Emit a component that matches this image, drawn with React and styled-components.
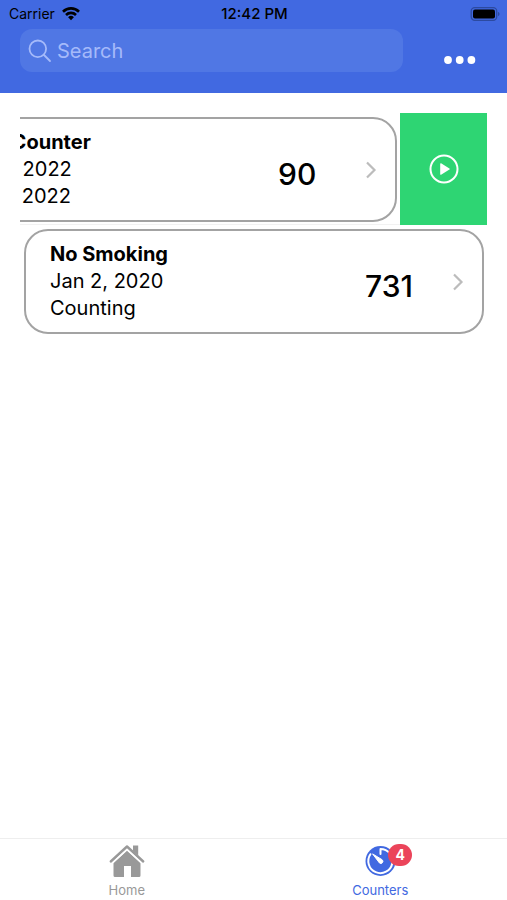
import React from "react";
import styled, { createGlobalStyle } from "styled-components";

const GlobalStyle = createGlobalStyle`
  *, *::before, *::after { box-sizing: border-box; }
  body { margin: 0; background: #fff; font-family: Inter, "Liberation Sans", sans-serif; color: #000; }
  button, input { font: inherit; }
`;

const Screen = styled.div`
  display: flex;
  flex-direction: column;
  min-height: 100vh;
`;

const Header = styled.header`
  background: #4169e1;
  padding-bottom: 21px;
`;

const StatusBar = styled.div`
  display: grid;
  grid-template-columns: 1fr auto 1fr;
  align-items: center;
  height: 29px;
  padding: 0 7px 2px 9px;
  font-size: 14px;
  line-height: 18px;
`;

const Carrier = styled.span`
  display: flex;
  align-items: center;
  gap: 7px;
`;

const Clock = styled.time`
  font-size: 15px;
  font-weight: 500;
`;

const Battery = styled.svg`
  justify-self: end;
`;

const Toolbar = styled.div`
  display: flex;
  align-items: center;
  padding: 0 20px;
`;

const SearchField = styled.label`
  display: flex;
  flex: 1;
  min-width: 0;
  align-items: center;
  gap: 5px;
  height: 43px;
  padding: 0 8px;
  border-radius: 12px;
  background: #5077e4;
  color: #a5bafa;
`;

const SearchInput = styled.input`
  flex: 1;
  min-width: 0;
  padding: 0;
  border: 0;
  outline: 0;
  background: transparent;
  color: #fff;
  font-size: 20px;
  line-height: 28px;
  &::placeholder { color: #a5bafa; opacity: 1; }
`;

const MoreButton = styled.button`
  display: flex;
  align-items: flex-end;
  justify-content: flex-end;
  width: 84px;
  height: 43px;
  padding: 0 11px 8px;
  border: 0;
  background: transparent;
  color: #fff;
`;

const List = styled.ul`
  flex: 1;
  margin: 0;
  padding: 20px 20px 0;
  list-style: none;
`;

const Row = styled.li`
  display: flex;
  justify-content: flex-end;
  height: 112px;
  overflow: hidden;
  box-shadow: ${({ $divided }) => ($divided ? "inset 0 -1px #f2f2f2" : "none")};
`;

const Card = styled.article`
  display: flex;
  flex: 0 0 calc(100% - 7px);
  align-items: center;
  margin: 4px 3px 3px 4px;
  padding: 0 18px 0 24px;
  border: 2px solid #a3a3a3;
  border-radius: 24px;
`;

const Details = styled.div`
  flex: 1;
  font-size: 20px;
  line-height: 27px;
  white-space: nowrap;
`;

const Title = styled.h2`
  margin: 0;
  font-size: 20px;
  font-weight: 700;
`;

const Line = styled.p`
  margin: 0;
`;

const Count = styled.output`
  width: 87px;
  padding-top: 8px;
  font-size: 30px;
  line-height: 36px;
  font-weight: 500;
`;

const ResumeButton = styled.button`
  display: flex;
  flex: 0 0 87px;
  align-items: center;
  justify-content: center;
  padding: 0;
  border: 0;
  background: #2ed573;
  color: #fff;
`;

const TabBar = styled.nav`
  display: flex;
  height: 62px;
  border-top: 1px solid #eee;
`;

const Tab = styled.a`
  display: flex;
  flex: 1;
  flex-direction: column;
  align-items: center;
  gap: 4px;
  padding-top: 5px;
  color: ${({ $active }) => ($active ? "#4169e1" : "#999")};
  font-size: 13px;
  line-height: 16px;
  font-weight: 400;
  text-decoration: none;
`;

const IconBox = styled.span`
  position: relative;
  display: flex;
  height: 34px;
`;

const Badge = styled.span`
  position: absolute;
  left: 24px;
  top: 0;
  width: 24px;
  height: 22px;
  border-radius: 11px;
  background: #eb445a;
  color: #fff;
  font-size: 14px;
  line-height: 22px;
  font-weight: 700;
  text-align: center;
`;

function WifiIcon() {
  return (
    <svg width="18" height="14" viewBox="0 0 18 14" fill="none" stroke="#000" strokeWidth="2.6" aria-hidden="true">
      <path d="M1 4.7C5.5.3 12.5.3 17 4.7M4 8C6.8 5.2 11.2 5.2 14 8" />
      <path d="M6.1 10.2a4.1 4.1 0 0 1 5.8 0L9 13.2z" fill="#000" stroke="none" />
    </svg>
  );
}

function BatteryIcon() {
  return (
    <Battery width="30" height="14" viewBox="0 0 30 14" role="img" aria-label="Battery full">
      <rect x="1.2" y=".7" width="25.5" height="12.6" rx="3.5" fill="none" stroke="#2c4aa0" strokeWidth="1.3" />
      <rect x="3" y="2.5" width="22" height="9" rx="2" />
      <path d="M28 5c2 .6 2 3.4 0 4z" fill="#2c4aa0" />
    </Battery>
  );
}

function SearchIcon() {
  return (
    <svg width="24" height="24" viewBox="0 0 24 24" fill="none" stroke="currentColor" strokeWidth="1.8" strokeLinecap="round" aria-hidden="true">
      <circle cx="9.8" cy="9.8" r="8.3" />
      <path d="m16 16 6 6" />
    </svg>
  );
}

function MoreIcon() {
  return (
    <svg width="32" height="8" viewBox="0 0 32 8" fill="currentColor" aria-hidden="true">
      <circle cx="4" cy="4" r="3.9" />
      <circle cx="15.7" cy="4" r="3.9" />
      <circle cx="27.4" cy="4" r="3.9" />
    </svg>
  );
}

function ChevronIcon() {
  return (
    <svg width="12" height="18" viewBox="0 0 12 18" fill="none" stroke="#bcbcbc" strokeWidth="2.2" aria-hidden="true">
      <path d="m2 1.5 7.5 7.5L2 16.5" />
    </svg>
  );
}

function PlayIcon() {
  return (
    <svg width="30" height="30" viewBox="0 0 30 30" fill="none" aria-hidden="true">
      <circle cx="15" cy="15" r="13.5" stroke="currentColor" strokeWidth="2" />
      <path d="M11.2 9.8v10.4c0 .5.5.7.9.5l8.3-5.1c.5-.3.5-.9 0-1.2l-8.3-5.1c-.4-.2-.9 0-.9.5z" fill="currentColor" />
    </svg>
  );
}

function HomeIcon() {
  return (
    <svg width="36" height="34" viewBox="0 0 36 34" fill="currentColor" aria-hidden="true">
      <path d="M24 1.5h5.2v10.2L24 6.8z" />
      <path d="M18 6.5 31.5 19v12.5q0 1.5-1.5 1.5h-8V22h-7v11H6q-1.5 0-1.5-1.5V19z" />
      <path d="M1.8 17.5 18 2.5l16.2 15" fill="none" stroke="currentColor" strokeWidth="2.4" strokeLinecap="round" strokeLinejoin="round" />
      <path d="M3.2 19.2 18 5.7l14.8 13.5" fill="none" stroke="#fff" strokeWidth="1.5" />
    </svg>
  );
}

function TimerIcon() {
  return (
    <svg width="32" height="34" viewBox="0 0 32 34" aria-hidden="true">
      <circle cx="16.5" cy="17" r="15" fill="currentColor" />
      <path d="M6.4 10.2A12.1 12.1 0 1 0 16.5 4.9v5" fill="none" stroke="#fff" strokeWidth="2" strokeLinecap="round" strokeLinejoin="round" />
      <path d="m8.6 9.9 9.5 5.8a2.1 2.1 0 0 1-2.6 3.3z" fill="#fff" stroke="#fff" strokeLinejoin="round" />
    </svg>
  );
}

const counters = [
  { title: "New Counter", start: "Jan 1, 2022", status: "Apr 1, 2022", count: 90, open: true },
  { title: "No Smoking", start: "Jan 2, 2020", status: "Counting", count: 731, open: false },
];

function CounterRow({ counter }) {
  return (
    <Row $divided={counter.open}>
      <Card>
        <Details>
          <Title>{counter.title}</Title>
          <Line>{counter.start}</Line>
          <Line>{counter.status}</Line>
        </Details>
        <Count>{counter.count}</Count>
        <ChevronIcon />
      </Card>
      {counter.open && (
        <ResumeButton type="button" aria-label="Resume">
          <PlayIcon />
        </ResumeButton>
      )}
    </Row>
  );
}

export default function App() {
  return (
    <>
      <GlobalStyle />
      <Screen>
        <Header>
          <StatusBar>
            <Carrier>Carrier <WifiIcon /></Carrier>
            <Clock>12:42 PM</Clock>
            <BatteryIcon />
          </StatusBar>
          <Toolbar>
            <SearchField>
              <SearchIcon />
              <SearchInput type="search" placeholder="Search" aria-label="Search" />
            </SearchField>
            <MoreButton type="button" aria-label="More options"><MoreIcon /></MoreButton>
          </Toolbar>
        </Header>
        <List>
          {counters.map((counter) => <CounterRow key={counter.title} counter={counter} />)}
        </List>
        <TabBar aria-label="Main">
          <Tab href="#home">
            <IconBox><HomeIcon /></IconBox>
            Home
          </Tab>
          <Tab href="#counters" $active aria-current="page">
            <IconBox><TimerIcon /><Badge>4</Badge></IconBox>
            Counters
          </Tab>
        </TabBar>
      </Screen>
    </>
  );
}
